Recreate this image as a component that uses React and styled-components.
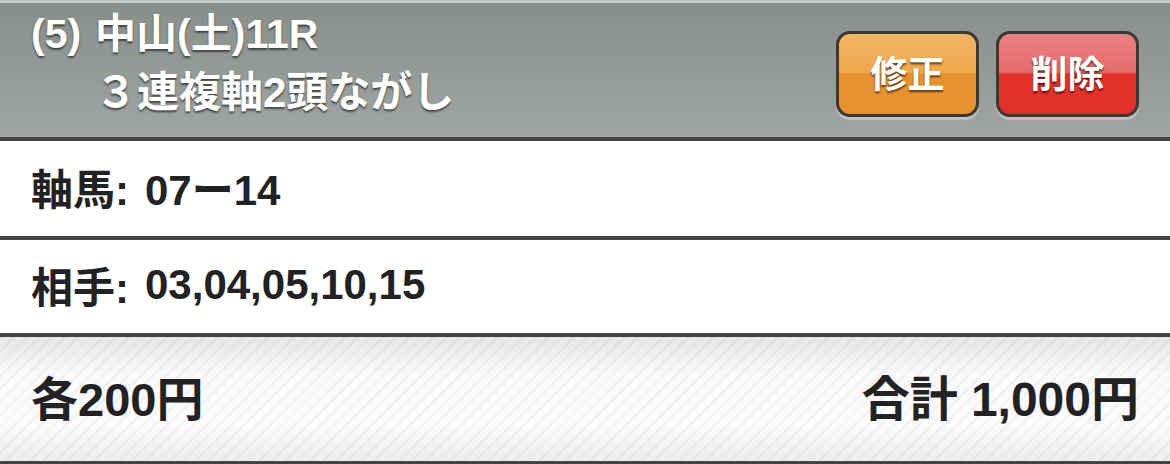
import React from 'react';
import styled, {createGlobalStyle} from 'styled-components';

const GlobalStyle = createGlobalStyle`
    html, body {
        margin: 0;
        padding: 0;
        background: #ffffff;
    }
    body {
        font-family: "Liberation Sans", "Noto Sans CJK JP", sans-serif;
        font-weight: bold;
    }
`;

const Card = styled.main`
    width: 1170px;
    height: 464px;
    overflow: hidden;
    display: flex;
    flex-direction: column;
`;

const Header = styled.header`
    box-sizing: border-box;
    height: 141px;
    border-top: 3px solid #c6c9c6;
    border-bottom: 4px solid #434343;
    background: linear-gradient(to bottom, #898e8a 0%, #959a96 50%, #a1a6a2 100%);
    display: flex;
    align-items: flex-start;
    justify-content: space-between;
    padding: 0 31px 0 31px;
`;

const Title = styled.div`
    color: #ffffff;
    text-shadow: 0 2px 2px rgba(0, 0, 0, 0.55);
    padding-top: 8px;
`;

const RaceLine = styled.div`
    font-size: 41px;
    line-height: 46px;
`;

const RaceNo = styled.span`
    margin-right: 14px;
`;

const BetLine = styled.div`
    font-size: 42px;
    line-height: 48px;
    margin-top: 12px;
    padding-left: 64px;
`;

const Buttons = styled.div`
    display: flex;
    gap: 17px;
    padding-top: 28px;
`;

const palettes = {
    orange: {top: '#f2b566', mid: '#eea84c', bottom: '#e8922f'},
    red: {top: '#ea8183', mid: '#e76b6c', bottom: '#e3302a'}
};

const ActionButton = styled.button`
    box-sizing: border-box;
    width: 143px;
    height: 86px;
    border: 3px solid #3e3835;
    border-radius: 14px;
    background: linear-gradient(
        to bottom,
        ${({$tone}) => palettes[$tone].top} 0%,
        ${({$tone}) => palettes[$tone].mid} 48%,
        ${({$tone}) => palettes[$tone].bottom} 50%,
        ${({$tone}) => palettes[$tone].bottom} 100%
    );
    box-shadow: 0 3px 1px rgba(255, 255, 255, 0.35);
    color: #ffffff;
    font-family: "Noto Sans CJK JP", sans-serif;
    font-weight: bold;
    font-size: 37px;
    text-shadow: 0 2px 2px rgba(0, 0, 0, 0.6);
    padding: 0 0 4px;
    cursor: pointer;
`;

const Row = styled.div`
    box-sizing: border-box;
    height: ${({$height}) => $height}px;
    border-bottom: 4px solid #434343;
    background: #ffffff;
    display: flex;
    align-items: center;
    padding: 0 31px 4px;
    color: #222222;
    font-size: 42px;
`;

const Label = styled.span`
    margin-right: 16px;
`;

const Footer = styled.footer`
    box-sizing: border-box;
    flex: 1;
    border-bottom: 3px solid #444444;
    background:
        repeating-linear-gradient(135deg, rgba(0, 0, 0, 0.035) 0 2px, transparent 2px 9px),
        linear-gradient(to bottom, #e6e6e6 0%, #f9f9f9 30%, #fbfbfb 70%, #ececec 100%);
    display: flex;
    align-items: center;
    justify-content: space-between;
    padding: 0 31px 8px 31px;
    color: #222222;
    font-size: 47px;
`;

const Total = styled.span`
    display: flex;
    gap: 13px;
    font-size: 48px;
`;

const App = () => (
    <Card>
        <GlobalStyle />
        <Header>
            <Title>
                <RaceLine><RaceNo>(5)</RaceNo>中山(土)11R</RaceLine>
                <BetLine>３連複軸2頭ながし</BetLine>
            </Title>
            <Buttons>
                <ActionButton $tone="orange">修正</ActionButton>
                <ActionButton $tone="red">削除</ActionButton>
            </Buttons>
        </Header>
        <Row $height={99}>
            <Label>軸馬:</Label>07ー14
        </Row>
        <Row $height={97}>
            <Label>相手:</Label>03,04,05,10,15
        </Row>
        <Footer>
            <span>各200円</span>
            <Total>
                <span>合計</span>
                <span>1,000円</span>
            </Total>
        </Footer>
    </Card>
);

export default App;
